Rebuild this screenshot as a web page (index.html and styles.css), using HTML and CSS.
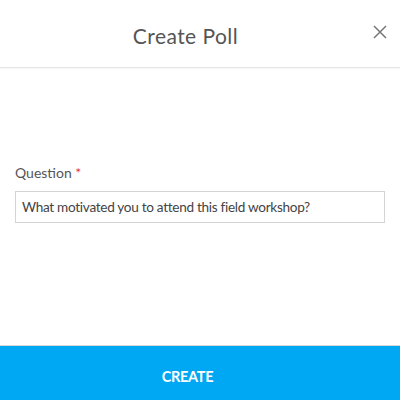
FILE: index.html
```html
<!DOCTYPE html>
<html>
<head>
<meta charset="utf-8">
<link rel="stylesheet" href="styles.css">
</head>
<body>
<div class="modal">
  <header class="header">
    <h1 class="title">Create Poll</h1>
    <button class="close" aria-label="Close">
      <svg width="14" height="14" viewBox="0 0 14 14"><path d="M1 1L13 13M13 1L1 13" stroke="#777" stroke-width="1.5" fill="none"/></svg>
    </button>
  </header>
  <main class="body">
    <label class="label">Question <span class="req">*</span></label>
    <div class="input">What motivated you to attend this field workshop?</div>
  </main>
  <footer class="footer">
    <button class="create">CREATE</button>
  </footer>
</div>
</body>
</html>
```
FILE: styles.css
```css
* { box-sizing: border-box; }
html, body { margin: 0; padding: 0; background: #fff; }
body { font-family: Lato, "Open Sans", sans-serif; color: #555; }
.modal { width: 400px; height: 400px; display: flex; flex-direction: column; }
.header {
  height: 68px;
  display: flex;
  align-items: center;
  justify-content: center;
  padding-right: 29px;
  position: relative;
  border-bottom: 1px solid #e4e4e4;
  box-shadow: 0 1px 2px rgba(0,0,0,0.04);
}
.title { margin: 0; font-size: 21px; font-weight: 400; color: #555; padding-top: 3px; letter-spacing: 0.45px; }
.close {
  position: absolute; right: 13px; top: 25px;
  border: 0; background: none; padding: 0; width: 14px; height: 14px; display: flex;
}
.body { flex: 1; padding: 96px 15px 0; display: flex; flex-direction: column; border-bottom: 1px solid #d8d8d8; }
.label { font-size: 14px; color: #555; line-height: 18px; margin-bottom: 9px; }
.req { color: #e53935; }
.input {
  height: 32px; border: 1px solid #d4d4d4; padding: 0 6px; display: flex; align-items: center;
  font-size: 13.6px; color: #444; letter-spacing: -0.3px;
}
.footer { height: 54px; }
.create {
  width: 100%; height: 100%; border: 0; background: #00a8f3; color: #fff;
  font-family: Lato, sans-serif; font-weight: 700; font-size: 14.5px; letter-spacing: -0.3px;
  padding: 6px 25px 0 0;
}
```
